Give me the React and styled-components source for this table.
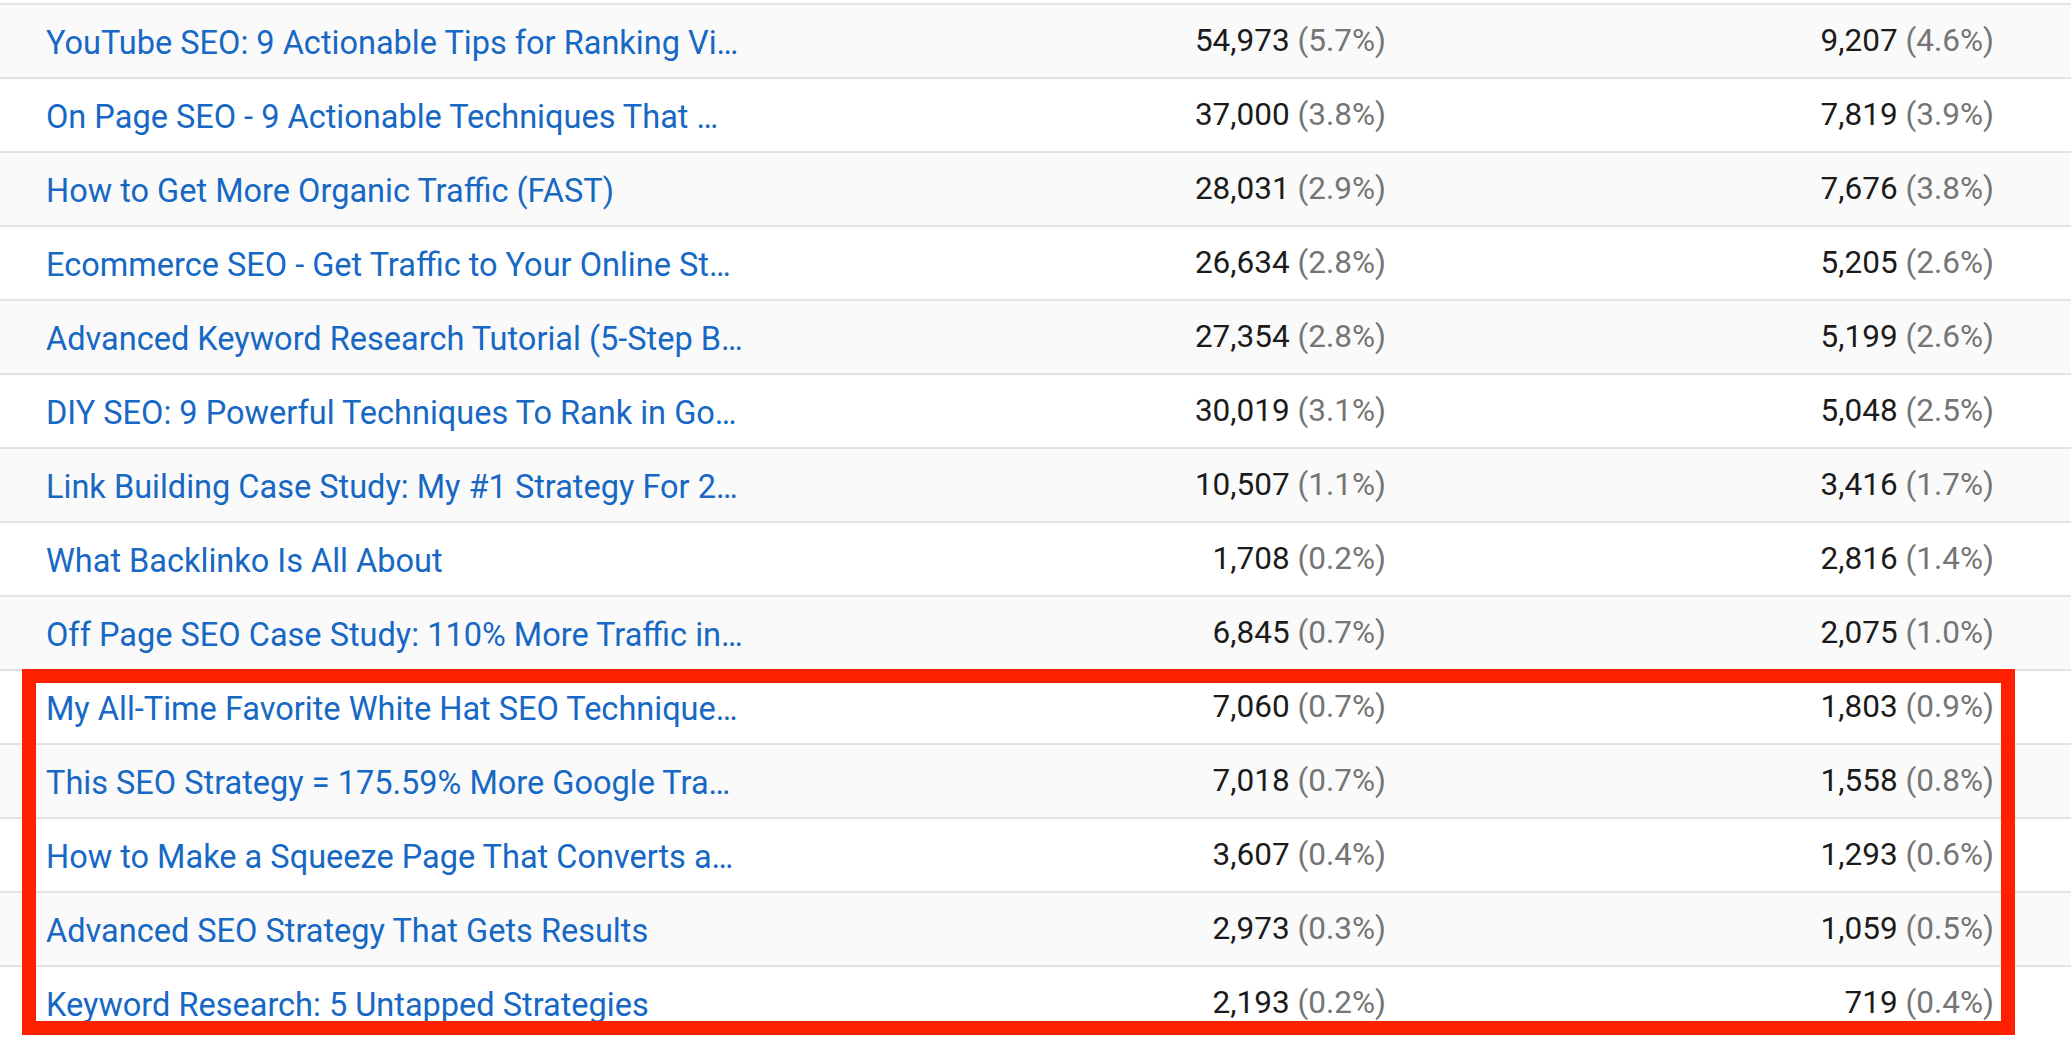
import styled, { createGlobalStyle } from "styled-components";

const rows = [
    ["YouTube SEO: 9 Actionable Tips for Ranking Vi…", "54,973", "5.7%", "9,207", "4.6%"],
    ["On Page SEO - 9 Actionable Techniques That …", "37,000", "3.8%", "7,819", "3.9%"],
    ["How to Get More Organic Traffic (FAST)", "28,031", "2.9%", "7,676", "3.8%"],
    ["Ecommerce SEO - Get Traffic to Your Online St…", "26,634", "2.8%", "5,205", "2.6%"],
    ["Advanced Keyword Research Tutorial (5-Step B…", "27,354", "2.8%", "5,199", "2.6%"],
    ["DIY SEO: 9 Powerful Techniques To Rank in Go…", "30,019", "3.1%", "5,048", "2.5%"],
    ["Link Building Case Study: My #1 Strategy For 2…", "10,507", "1.1%", "3,416", "1.7%"],
    ["What Backlinko Is All About", "1,708", "0.2%", "2,816", "1.4%"],
    ["Off Page SEO Case Study: 110% More Traffic in…", "6,845", "0.7%", "2,075", "1.0%"],
    ["My All-Time Favorite White Hat SEO Technique…", "7,060", "0.7%", "1,803", "0.9%"],
    ["This SEO Strategy = 175.59% More Google Tra…", "7,018", "0.7%", "1,558", "0.8%"],
    ["How to Make a Squeeze Page That Converts a…", "3,607", "0.4%", "1,293", "0.6%"],
    ["Advanced SEO Strategy That Gets Results", "2,973", "0.3%", "1,059", "0.5%"],
    ["Keyword Research: 5 Untapped Strategies", "2,193", "0.2%", "719", "0.4%"],
];

const ROW_H = 74;
const HIGHLIGHT_FROM = 9;

export default function App() {
    return (
        <>
            <GlobalStyle />
            <Table>
                {rows.map(([title, views, viewsPct, watch, watchPct], i) => (
                    <Row key={title} $odd={i % 2 === 1}>
                        <TitleCell>
                            <VideoLink href="#">{title}</VideoLink>
                        </TitleCell>
                        <NumCell>
                            {views} <Pct>({viewsPct})</Pct>
                        </NumCell>
                        <NumCell>
                            {watch} <Pct>({watchPct})</Pct>
                        </NumCell>
                    </Row>
                ))}
                <Highlight
                    style={{
                        top: 3 + HIGHLIGHT_FROM * ROW_H,
                        height: (rows.length - HIGHLIGHT_FROM) * ROW_H - 4,
                    }}
                />
            </Table>
        </>
    );
}

const GlobalStyle = createGlobalStyle`
    body {
        margin: 0;
        background: #ffffff;
        font-family: Roboto, "Liberation Sans", sans-serif;
        overflow: hidden;
    }
`;

const Table = styled.div`
    position: relative;
    padding-top: 3px;
    height: 1039px;
    overflow: hidden;
`;

const Row = styled.div`
    display: grid;
    grid-template-columns: 800px 586px 608px;
    align-items: center;
    height: ${ROW_H - 2}px;
    border-top: 2px solid #e3e3e3;
    background: ${(props) => (props.$odd ? "#ffffff" : "#fafafa")};
    font-size: 31.5px;
    line-height: 1;
`;

const TitleCell = styled.div`
    padding-left: 46px;
    padding-top: 5px;
    white-space: nowrap;
    font-size: 32.5px;
`;

const VideoLink = styled.a`
    color: #1668c4;
    text-decoration: none;
`;

const NumCell = styled.div`
    text-align: right;
    color: #1b1b1b;
    white-space: nowrap;
`;

const Pct = styled.span`
    color: #757575;
`;

const Highlight = styled.div`
    position: absolute;
    left: 22px;
    width: 1993px;
    box-sizing: border-box;
    border: 14.5px solid #ff2000;
    pointer-events: none;
`;
